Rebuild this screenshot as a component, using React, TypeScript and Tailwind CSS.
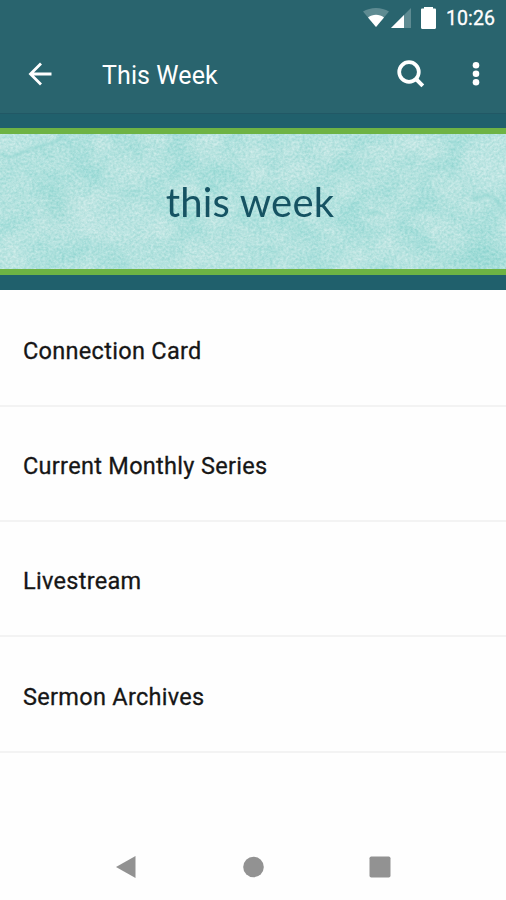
import React from "react";

const items: string[] = [
  "Connection Card",
  "Current Monthly Series",
  "Livestream",
  "Sermon Archives",
];

const StatusBar: React.FC = () => {
  return (
    <div className="flex h-[36px] items-center justify-end pr-[11px] text-white">
      <svg width="26" height="20" viewBox="0 0 26 20">
        <path d="M0 3.6C7.5-1.2 18.5-1.2 26 3.6L13 19Z" fill="#fff" opacity=".25" />
        <path d="M5 9.6C9.5 5.8 16.5 5.8 21 9.6L13 19Z" fill="#fff" />
      </svg>
      <svg className="ml-[2px]" width="20" height="20" viewBox="0 0 20 20">
        <path d="M20 0V20H0Z" fill="#fff" opacity=".25" />
        <path d="M13 7V20H0Z" fill="#fff" />
      </svg>
      <svg className="ml-[10px]" width="15" height="22" viewBox="0 0 15 22">
        <path
          d="M3 0h9v1.5h1.8c.7 0 1.2.5 1.2 1.2v18.1c0 .7-.5 1.2-1.2 1.2H1.2c-.7 0-1.2-.5-1.2-1.2V2.7c0-.7.5-1.2 1.2-1.2H3Z"
          fill="#fff"
        />
      </svg>
      <span className="ml-[10px] pt-px text-[19.5px] leading-none tracking-[0.1px] [-webkit-text-stroke:0.3px_#fff]">
        10:26
      </span>
    </div>
  );
};

const AppBar: React.FC = () => {
  return (
    <div className="flex h-[77px] items-center pb-px pl-[28px] pr-[20px] text-white">
      <svg width="24" height="24" viewBox="0 0 24 24" fill="none" stroke="currentColor" strokeWidth="2.8">
        <path d="M23.5 12H2.5M13 1.5L2.5 12L13 22.5" />
      </svg>
      <h1 className="ml-[50px] pt-[2px] text-[25px] leading-none tracking-[0.1px]">This Week</h1>
      <svg className="ml-auto" width="28" height="28" viewBox="0 0 28 28" fill="none" stroke="currentColor">
        <circle cx="12" cy="12" r="9.8" strokeWidth="3.7" />
        <path d="M18.5 18.5L25.8 25.8" strokeWidth="4" />
      </svg>
      <svg className="ml-[41px]" width="20" height="26" viewBox="0 0 20 26" fill="currentColor">
        <circle cx="10" cy="4.2" r="3.3" />
        <circle cx="10" cy="12.7" r="3.3" />
        <circle cx="10" cy="21.2" r="3.3" />
      </svg>
    </div>
  );
};

// Watercolour paper behind the banner title
const Paper: React.FC = () => {
  return (
    <svg className="absolute inset-0" width="506" height="135" viewBox="0 0 506 135">
      <filter id="wash" x="0" y="0" width="100%" height="100%" colorInterpolationFilters="sRGB">
        <feTurbulence type="fractalNoise" baseFrequency="0.03 0.037" numOctaves="6" seed="21" />
        <feColorMatrix values="0.3 0 0 0 0.55  0.09 0 0 0 0.85  0.1 0 0 0 0.83  0 0 0 0 1" />
      </filter>
      <filter id="grain" x="0" y="0" width="100%" height="100%" colorInterpolationFilters="sRGB">
        <feTurbulence type="fractalNoise" baseFrequency="0.37 0.41" numOctaves="4" seed="5" />
        <feColorMatrix values="0.7 0 0 0 0.35  0.3 0 0 0 0.72  0.32 0 0 0 0.7  0 0 0 0 0.34" />
      </filter>
      <filter id="soft" x="-10%" y="-20%" width="120%" height="140%">
        <feGaussianBlur stdDeviation="1.6" />
      </filter>
      <filter id="cloud" x="-50%" y="-50%" width="200%" height="200%">
        <feGaussianBlur stdDeviation="9" />
      </filter>
      <rect width="506" height="135" filter="url(#wash)" />
      <g filter="url(#cloud)">
        <ellipse cx="105" cy="88" rx="60" ry="14" fill="#c9ebe9" opacity=".6" />
        <ellipse cx="20" cy="8" rx="26" ry="8" fill="#d0eeec" opacity=".9" />
        <ellipse cx="300" cy="35" rx="25" ry="12" fill="#c9ebe9" opacity=".5" />
        <ellipse cx="200" cy="122" rx="90" ry="12" fill="#c4e9e6" opacity=".6" />
        <ellipse cx="485" cy="30" rx="22" ry="28" fill="#d0eeec" opacity=".6" />
        <ellipse cx="475" cy="125" rx="45" ry="9" fill="#8fd8d1" opacity=".7" />
        <ellipse cx="58" cy="72" rx="10" ry="14" fill="#84d3cc" opacity=".6" />
      </g>
      <rect width="506" height="135" filter="url(#grain)" />
      <g fill="none" stroke="#83d0ca" strokeWidth="2.5" opacity=".6" filter="url(#soft)">
        <path d="M0 19L8 23L14 22L28 16L42 12L57 7L65 0" />
        <path d="M472 65L488 61L497 67L506 80" />
        <path d="M367 81L376 77L384 82" />
      </g>
    </svg>
  );
};

const Banner: React.FC = () => {
  return (
    <div className="h-[177px] border-t border-[#215865] bg-[#20606c] pt-[14px]">
      <div className="relative flex h-[147px] items-center justify-center overflow-hidden border-y-[6px] border-[#6eb344] bg-[#b2e2df]">
        <Paper />
        <h2 className="relative right-[3px] font-[Lato,sans-serif] text-[40px] leading-none tracking-[0.2px] text-[#165363]">
          this week
        </h2>
      </div>
    </div>
  );
};

const NavBar: React.FC = () => {
  return (
    <div className="mt-auto flex h-[67px] items-center justify-center gap-[105px] text-[#929292]">
      <svg width="22" height="24" viewBox="0 0 22 24" fill="currentColor">
        <path d="M20.5 1V23L1 12Z" />
      </svg>
      <svg width="22" height="22" viewBox="0 0 22 22" fill="currentColor">
        <circle cx="11.5" cy="11" r="10.3" />
      </svg>
      <svg width="22" height="22" viewBox="0 0 22 22" fill="currentColor">
        <rect x=".5" y=".5" width="21" height="21" rx="1.8" />
      </svg>
    </div>
  );
};

export default function App() {
  return (
    <div className="flex h-[900px] w-[506px] flex-col overflow-hidden bg-[#fefefe] font-[Roboto,sans-serif]">
      <header className="bg-[#29646e]">
        <StatusBar />
        <AppBar />
      </header>
      <Banner />
      <ul className="pt-[1.5px]">
        {items.map((item) => (
          <li
            key={item}
            className="flex h-[115.33px] items-center border-b-2 border-[#f3f3f3] pl-[23px] pt-[6px] text-[23.5px] tracking-[0.3px] text-[#161616] [-webkit-text-stroke:0.3px_#161616]"
          >
            {item}
          </li>
        ))}
      </ul>
      <NavBar />
    </div>
  );
}
